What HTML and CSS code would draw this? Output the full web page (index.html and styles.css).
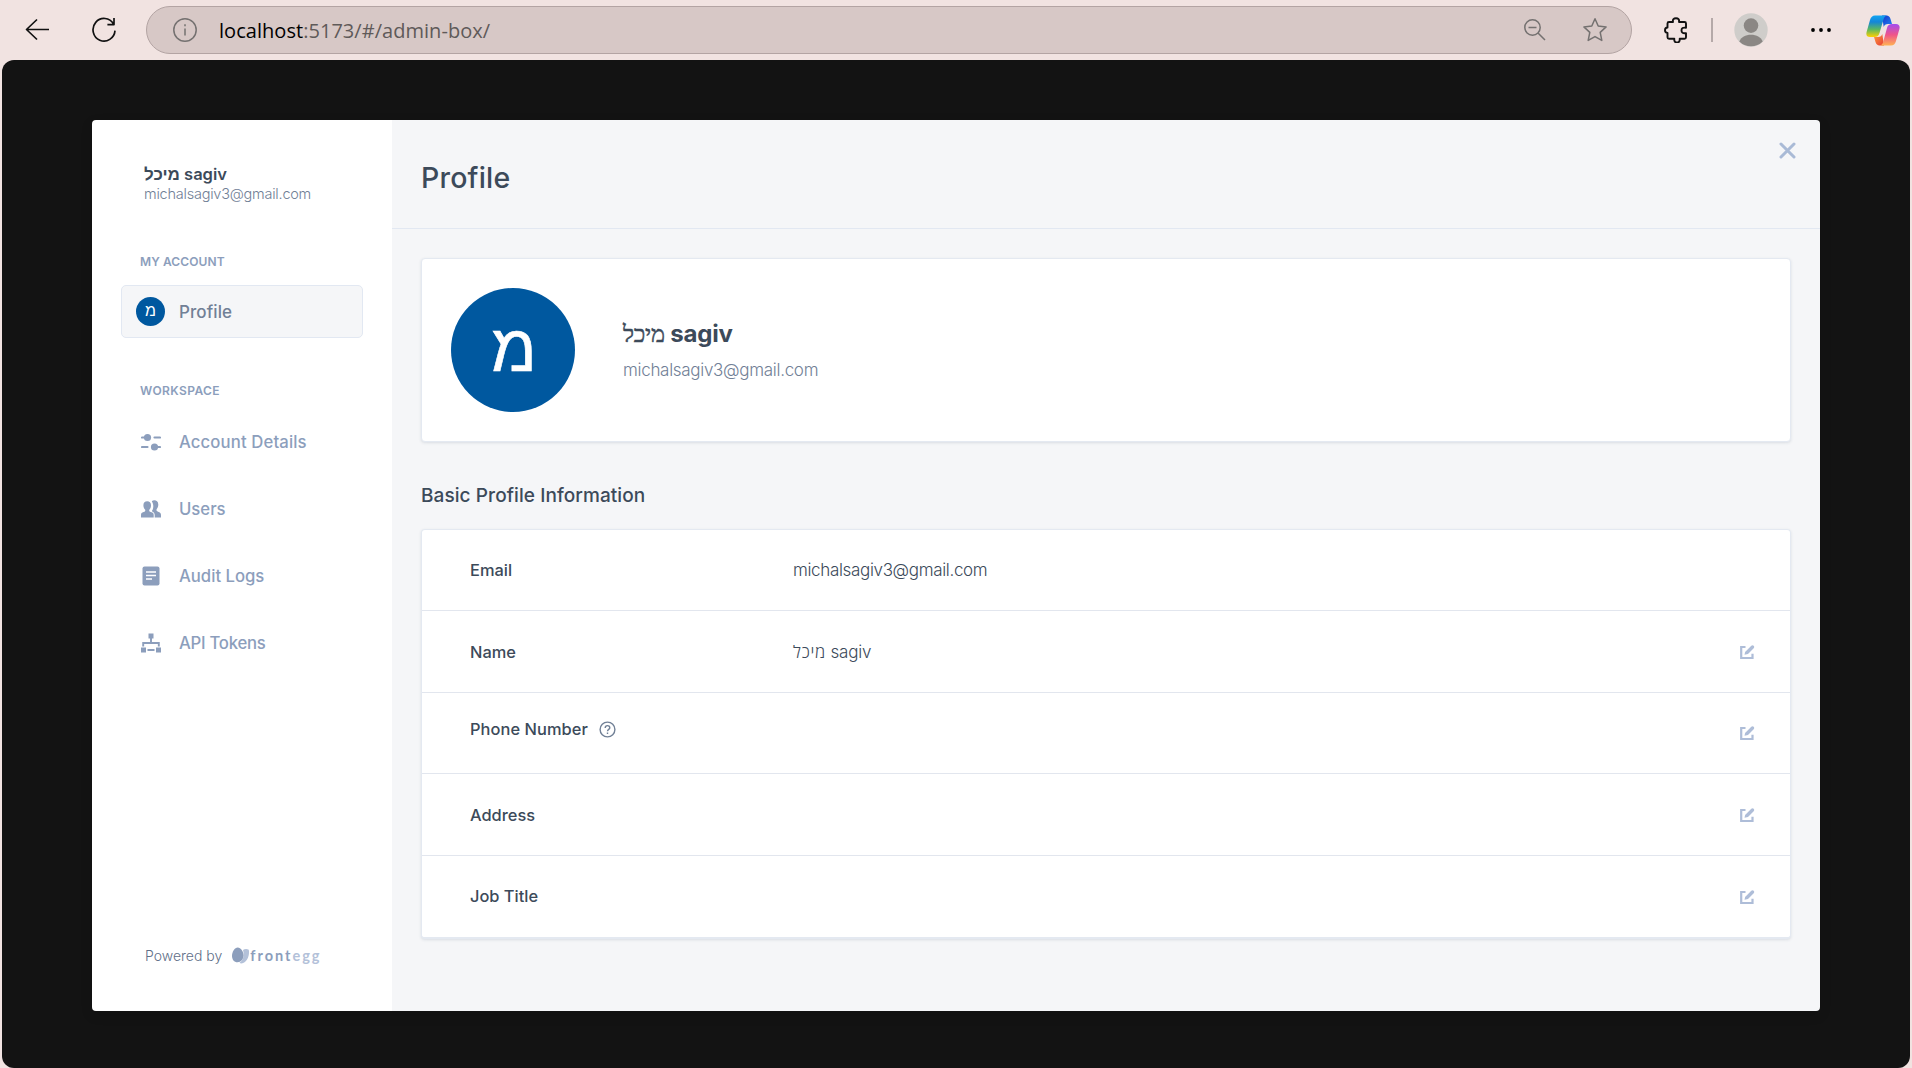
FILE: index.html
```html
<!DOCTYPE html>
<html lang="en">
<head>
<meta charset="utf-8">
<title>Profile</title>
<link rel="stylesheet" href="styles.css">
</head>
<body>
<header class="toolbar">
  <svg class="back" width="24" height="24" viewBox="0 0 24 24"><path d="M24 11.500H1.500M12 1.500 1.500 11.500l10.500 10"/></svg>
  <svg class="reload" width="24" height="26" viewBox="0 0 24 26"><path d="M21.500 7A11 11.300 0 1 0 23 13.600M22 1v6.600h-6.600"/></svg>
  <div class="address">
    <svg class="info" width="24" height="24" viewBox="0 0 24 24"><circle cx="12" cy="12" r="11.200"/><path d="M12 10.500v7M12 6.200v2"/></svg>
    <div class="url"><span class="host">localhost</span><span class="path">:5173/#/admin-box/</span></div>
    <svg class="zoom-out" width="24" height="24" viewBox="0 0 24 24"><circle cx="9.500" cy="9.500" r="7.700"/><path d="M5.500 9.500h8M15 15l7 7"/></svg>
    <svg class="star" width="26" height="26" viewBox="0 0 26 26"><path d="M13 1.800l3.200 7.200 7.900.9-5.900 5.500 1.600 8L13 19.600l-6.800 3.800 1.600-8L1.900 9.900 9.800 9z"/></svg>
  </div>
  <svg class="puzzle" width="24" height="26" viewBox="0 0 24 26"><path d="M5 5h4c-.6-2.800.8-3.700 3-3.700s3.500 1 3 3.700h5.500c1 0 1.500.5 1.500 1.500v4.200c-3.200-.5-4.500.6-4.500 2.700s1.300 3.200 4.500 2.700v4.200c0 1-.5 1.500-1.500 1.500h-4.800c.3 2.500-.8 3.600-2.700 3.600s-3-1.100-2.700-3.600H5c-1 0-1.500-.5-1.500-1.500v-4.300C1.800 15.800 1 15 1 13.200s1-2.700 2.500-2.700v-4C3.500 5.500 4 5 5 5z"/></svg>
  <span class="divider"></span>
  <svg class="person" width="34" height="34" viewBox="0 0 34 34"><circle cx="17" cy="17" r="16.700" fill="#cfcdca"/><circle cx="17" cy="12.600" r="7.300" fill="#8b8784"/><path d="M5.300 28.500C7 24 11.500 21.700 17 21.700S27 24 28.700 28.500A16.500 16.500 0 0 1 5.300 28.500z" fill="#8b8784"/></svg>
  <svg class="dots" width="22" height="6" viewBox="0 0 22 6"><circle cx="3" cy="3" r="1.900"/><circle cx="11" cy="3" r="1.900"/><circle cx="19" cy="3" r="1.900"/></svg>
  <svg class="copilot" width="34" height="31" viewBox="0 0 34 31">
    <defs>
      <linearGradient id="blade-left" x1="0" y1="0" x2="0" y2="1"><stop offset="0" stop-color="#12a5f2"/><stop offset=".3" stop-color="#1486d8"/><stop offset=".65" stop-color="#5cb85f"/><stop offset="1" stop-color="#ffd000"/></linearGradient>
      <linearGradient id="blade-right" x1="0" y1="0" x2="0" y2="1"><stop offset="0" stop-color="#a34df0"/><stop offset=".5" stop-color="#ef5489"/><stop offset="1" stop-color="#ffb152"/></linearGradient>
      <linearGradient id="fold-top" x1="0" y1="0" x2="1" y2="1"><stop offset="0" stop-color="#1736c8"/><stop offset="1" stop-color="#2087f5"/></linearGradient>
      <linearGradient id="fold-bottom" x1="0" y1="0" x2="1" y2="1"><stop offset="0" stop-color="#ff9a3c"/><stop offset="1" stop-color="#e63d35"/></linearGradient>
    </defs>
    <path d="M16 .5h4.500c2 0 3.500 1.500 4 3.500l1.500 5h-4c-2.500 0-3.600 1-4.300 3z" fill="url(#fold-top)"/>
    <path d="M18 30.500h-4.500c-2 0-3.400-1.500-4-3.500L8 22h4c2.500 0 3.600-1 4.300-3z" fill="url(#fold-bottom)"/>
    <path d="M9 .5h12c-2 .4-2.900 2-3.500 4l-4 13.500c-.9 3-2.500 4-5 4H4c-3 0-4.200-2-3.400-5L4 5C4.900 2 6.500.5 9 .5z" fill="url(#blade-left)"/>
    <path d="M25 30.500H14c2-.4 2.700-2 3.300-4L21 13c.8-3 2.500-4 5-4h4c3 0 4.200 2 3.400 5L30 26c-.9 3-2.500 4.500-5 4.500z" fill="url(#blade-right)"/>
  </svg>
</header>

<main class="viewport">
  <div class="modal">
    <aside class="sidebar">
      <div class="account">
        <div class="account-name"><span class="he-sans">מיכל</span> sagiv</div>
        <div class="account-mail">michalsagiv3@gmail.com</div>
      </div>
      <h2 class="group g-account">MY ACCOUNT</h2>
      <a class="item active"><span class="avatar-small">מ</span><span class="t-profile">Profile</span></a>
      <h2 class="group g-work">WORKSPACE</h2>
      <nav class="nav">
        <a class="item"><svg width="20" height="18" viewBox="0 0 20 18"><path d="M1 4.500h4M13.500 4.500H19M1 14h5.500M12 14h7" fill="none" stroke="#8c9ebc" stroke-width="2.200" stroke-linecap="round"/><circle cx="6.500" cy="4.500" r="3.600"/><circle cx="13.500" cy="14" r="3.600"/></svg><span class="t-details">Account Details</span></a>
        <a class="item"><svg width="20" height="18" viewBox="0 0 20 18"><path d="M10.800 1.200C12.500-.4 17.300-.2 17.300 4.500c0 2-.8 3.700-1.700 4.700-.3 1.500 0 2 1.500 2.500 2 .6 2.900 1.400 2.900 3.200V17.500h-6.300v-2.600c0-1.900-1.200-2.700-2.500-3.400-.4-.4-.2-.9.300-1.500C12.800 7.500 12.500 3.600 10.800 1.200z"/><path d="M6.200 1.300c2.300 0 3.800 1.500 3.800 4 0 2-.8 3.600-1.700 4.500-.3 1.300.2 1.800 1.600 2.300 2 .6 2.800 1.200 2.800 2.900v2.500H0V15c0-1.700.8-2.300 2.600-2.900 1.400-.5 1.900-1 1.600-2.300-.9-.9-1.800-2.500-1.800-4.500 0-2.500 1.500-4 3.800-4z"/></svg><span class="t-users">Users</span></a>
        <a class="item"><svg width="20" height="20" viewBox="0 0 20 20"><rect x="1.500" y=".5" width="17" height="19" rx="2"/><path d="M5 6h10M5 9.500h10M5 13h6" stroke="#fff" stroke-width="1.300"/></svg><span class="t-logs">Audit Logs</span></a>
        <a class="item"><svg width="20" height="20" viewBox="0 0 20 20"><path d="M7.500.500h5v5h-5zM0 14.500h5v5H0zM15 14.500h5v5h-5z"/><path d="M10 5v5M2.200 13.500V10h15.600v3.500M6.500 17h7" fill="none" stroke="#8c9ebc" stroke-width="1.900"/></svg><span class="t-tokens">API Tokens</span></a>
      </nav>
      <footer class="powered">
        <span class="t-powered">Powered by</span>
        <svg width="18" height="17" viewBox="0 0 18 17"><path d="M11 3c1.500-1.200 4-1.300 5.800-.3 1 5.300-1.300 12-6.300 13.600-1.300.3-2.500 0-3-.5C11.500 13.500 12.500 8 11 3z" fill="#b3c1d9"/><path d="M5.800.4c2.900 0 5.700 4 5.700 7.800s-2.500 7-6 7S0 12.500 0 8.700 2.600.4 5.800.4z" fill="#8c9ebc"/></svg>
        <span class="brand">front<span>egg</span></span>
      </footer>
    </aside>

    <section class="content">
      <header class="page-head">
        <h1>Profile</h1>
        <svg class="close" width="17" height="17" viewBox="0 0 17 17"><path d="M2 2l13 13M15 2 2 15"/></svg>
      </header>
      <div class="body">
        <div class="card hero">
          <span class="avatar">מ</span>
          <div class="hero-text">
            <div class="hero-name"><span class="he-serif">מיכל</span> sagiv</div>
            <div class="hero-mail">michalsagiv3@gmail.com</div>
          </div>
        </div>
        <h3>Basic Profile Information</h3>
        <div class="card table">
          <div class="row"><span class="label">Email</span><span class="value v-mail">michalsagiv3@gmail.com</span></div>
          <div class="row"><span class="label">Name</span><span class="value v-name"><span class="he">מיכל</span> sagiv</span>
            <svg class="edit" width="16" height="16" viewBox="0 0 16 16"><path d="M6.500 3H2.200v11H13.500V9.800"/><path class="pen" d="M8.300 8.200 13.500 3"/><path class="tip" d="M5.500 10.800 6.300 7.200 9 9.900z"/></svg></div>
          <div class="row phone"><span class="label">Phone Number</span><svg class="help" width="17" height="17" viewBox="0 0 17 17"><circle cx="8.500" cy="8.500" r="7.400"/><path d="M6.200 6.900c0-3 4.600-2.900 4.600-.2 0 1.700-2.300 1.700-2.300 3.500M8.500 11.500v1.500"/></svg>
            <svg class="edit" width="16" height="16" viewBox="0 0 16 16"><path d="M6.500 3H2.200v11H13.500V9.800"/><path class="pen" d="M8.300 8.200 13.500 3"/><path class="tip" d="M5.500 10.800 6.300 7.200 9 9.900z"/></svg></div>
          <div class="row"><span class="label">Address</span>
            <svg class="edit" width="16" height="16" viewBox="0 0 16 16"><path d="M6.500 3H2.200v11H13.500V9.800"/><path class="pen" d="M8.300 8.200 13.500 3"/><path class="tip" d="M5.500 10.800 6.300 7.200 9 9.900z"/></svg></div>
          <div class="row last"><span class="label">Job Title</span>
            <svg class="edit" width="16" height="16" viewBox="0 0 16 16"><path d="M6.500 3H2.200v11H13.500V9.800"/><path class="pen" d="M8.300 8.200 13.500 3"/><path class="tip" d="M5.500 10.800 6.300 7.200 9 9.900z"/></svg></div>
        </div>
      </div>
    </section>
  </div>
</main>
</body>
</html>
```
FILE: styles.css
```css
* { box-sizing: border-box; }
body { margin: 0; width: 1912px; height: 1068px; overflow: hidden; background: #f1e3e1; font-family: Inter, "Liberation Sans", sans-serif; }
h1, h2, h3 { margin: 0; }
svg { display: block; flex: none; }
span, div, a { white-space: nowrap; }

.toolbar { height: 60px; display: flex; align-items: center; padding-left: 25px; }
.toolbar svg { fill: none; stroke-linejoin: round; }
.back, .reload { stroke: #111; stroke-width: 1.7; }
.back { margin-right: 43px; }
.reload { margin-right: 30px; }
.address { width: 1486px; height: 48px; border: 1px solid #b3a4a3; border-radius: 24px; background: #d7c8c6; display: flex; align-items: center; padding-left: 26px; margin-right: 32px; }
.address svg { stroke: #747170; stroke-width: 1.5; }
.info { margin-right: 22px; }
.url { flex: 1; padding-top: 1px; font: 20px "Open Sans", sans-serif; color: #5f5a59; line-height: 28px; letter-spacing: .04px; }
.host { color: #000; }
.zoom-out { margin-right: 35px; }
.star { margin-right: 23px; }
.puzzle { stroke: #111; stroke-width: 1.9; margin-right: 23px; }
.divider { width: 2px; height: 24px; background: #b5a9a8; margin-right: 21px; }
.person { margin-right: 42px; }
.toolbar .dots { fill: #000; margin-right: 34px; }

.viewport { width: 1908px; height: 1008px; margin-left: 2px; padding: 60px 90px; background: #131313; border-radius: 12px; }
.modal { width: 1728px; height: 891px; border-radius: 4px; overflow: hidden; display: flex; box-shadow: 0 4px 12px #0002; }
.sidebar { width: 300px; background: #fff; padding: 41px 29px 0; display: flex; flex-direction: column; }
.account { padding-left: 23px; height: 84px; }
.account-name { height: 26px; font-size: 16.500px; font-weight: 600; line-height: 26px; color: #3c4a5a; }
.account-mail { font-size: 14.500px; font-weight: 300; line-height: 13px; letter-spacing: -.23px; color: #718096; }
.group { font-size: 12px; font-weight: 600; line-height: 34px; color: #8c9ebc; padding-left: 19px; letter-spacing: .1px; }
.g-account { margin-bottom: 6px; }
.g-work { margin: 36px 0 0; letter-spacing: .4px; }
.item { display: flex; align-items: center; height: 67px; padding-left: 20px; gap: 18px; font-size: 16.700px; font-weight: 500; color: #8c9ebc; fill: #8c9ebc; }
.t-details { letter-spacing: .13px; }
.t-tokens { letter-spacing: -.25px; }
.active { height: 53px; padding-left: 14px; gap: 14px; font-size: 17px; border: 1px solid #e2e8f2; border-radius: 5px; background: #f5f6f8; color: #718096; }
.t-profile { letter-spacing: .1px; }
.avatar-small { width: 29px; height: 29px; border-radius: 50%; background: #00589f; color: #fff; font: 16px/28px "Liberation Sans", sans-serif; text-align: center; }
.he { font-family: "Open Sans", "Liberation Sans", sans-serif; letter-spacing: .7px; }
.he-sans { font-family: "Liberation Sans", sans-serif; font-weight: 700; font-size: 17px; }
.he-serif { font-family: "Liberation Serif", serif; font-weight: 400; font-size: 23.500px; -webkit-text-stroke: .5px currentColor; }
.powered { display: flex; align-items: center; margin-top: auto; height: 20px; margin-bottom: 46px; padding-left: 24px; font-size: 14px; font-weight: 300; color: #5f6f88; }
.powered svg { margin: 0 0 0 10px; }
.brand { font: 700 14.500px Lato, sans-serif; letter-spacing: 2px; color: #8c9ebc; }
.brand span { color: #b3c1d9; }

.content { flex: 1; background: #f5f6f8; }
.page-head { height: 109px; border-bottom: 1px solid #e2e8f2; display: flex; justify-content: space-between; padding: 22px 24px 0 29px; }
h1 { font-size: 28.500px; line-height: 72px; font-weight: 500; letter-spacing: .2px; color: #3c4a5a; }
.close { stroke: #a9bad6; stroke-width: 3; stroke-linecap: round; }
.body { padding: 29px 29px 0 29px; }
.card { background: #fff; border: 1px solid #e4e9f1; border-radius: 4px; box-shadow: 0 1px 3px #2a406022; }
.hero { height: 184px; padding-left: 29px; display: flex; align-items: center; gap: 48px; }
.avatar { width: 124px; height: 124px; padding-left: 2px; border-radius: 50%; background: #00589f; color: #fff; font: 66px/120px "Liberation Sans", sans-serif; text-align: center; -webkit-text-stroke: .6px #fff; }
.hero-text { padding-top: 6px; }
.hero-name { height: 34px; font-size: 24px; font-weight: 700; line-height: 34px; letter-spacing: -.2px; color: #3c4a5a; }
.hero-mail { font-size: 17px; font-weight: 300; line-height: 38px; letter-spacing: -.3px; color: #718096; }
h3 { font-size: 19px; font-weight: 500; line-height: 30px; letter-spacing: .08px; margin: 39px 0 18px; color: #3c4a5a; }
.table { height: 410px; border-bottom-width: 2px; }
.row { height: 82px; display: flex; align-items: center; padding: 0 35px 0 48px; color: #3c4a5a; }
.row:first-child { height: 80px; }
.row.phone { height: 81px; }
.row + .row { border-top: 1px solid #e2e6ee; }
.label { width: 323px; font-size: 16.400px; font-weight: 500; }
.last .label { transform: translateY(-1px); }
.value { font-size: 17px; font-weight: 300; }
.v-mail { letter-spacing: -.34px; }
.v-name { letter-spacing: -.2px; }
.phone .label { width: auto; margin-right: 11px; letter-spacing: .07px; }
.phone .label, .help { transform: translateY(-4px); }
.help { fill: none; stroke: #718096; stroke-width: 1.400; }
.edit { margin-left: auto; fill: none; stroke: #aebdd8; stroke-width: 2.200; }
.edit .pen { stroke-width: 3.400; stroke-linecap: round; }
.edit .tip { fill: #aebdd8; stroke: none; }
```
